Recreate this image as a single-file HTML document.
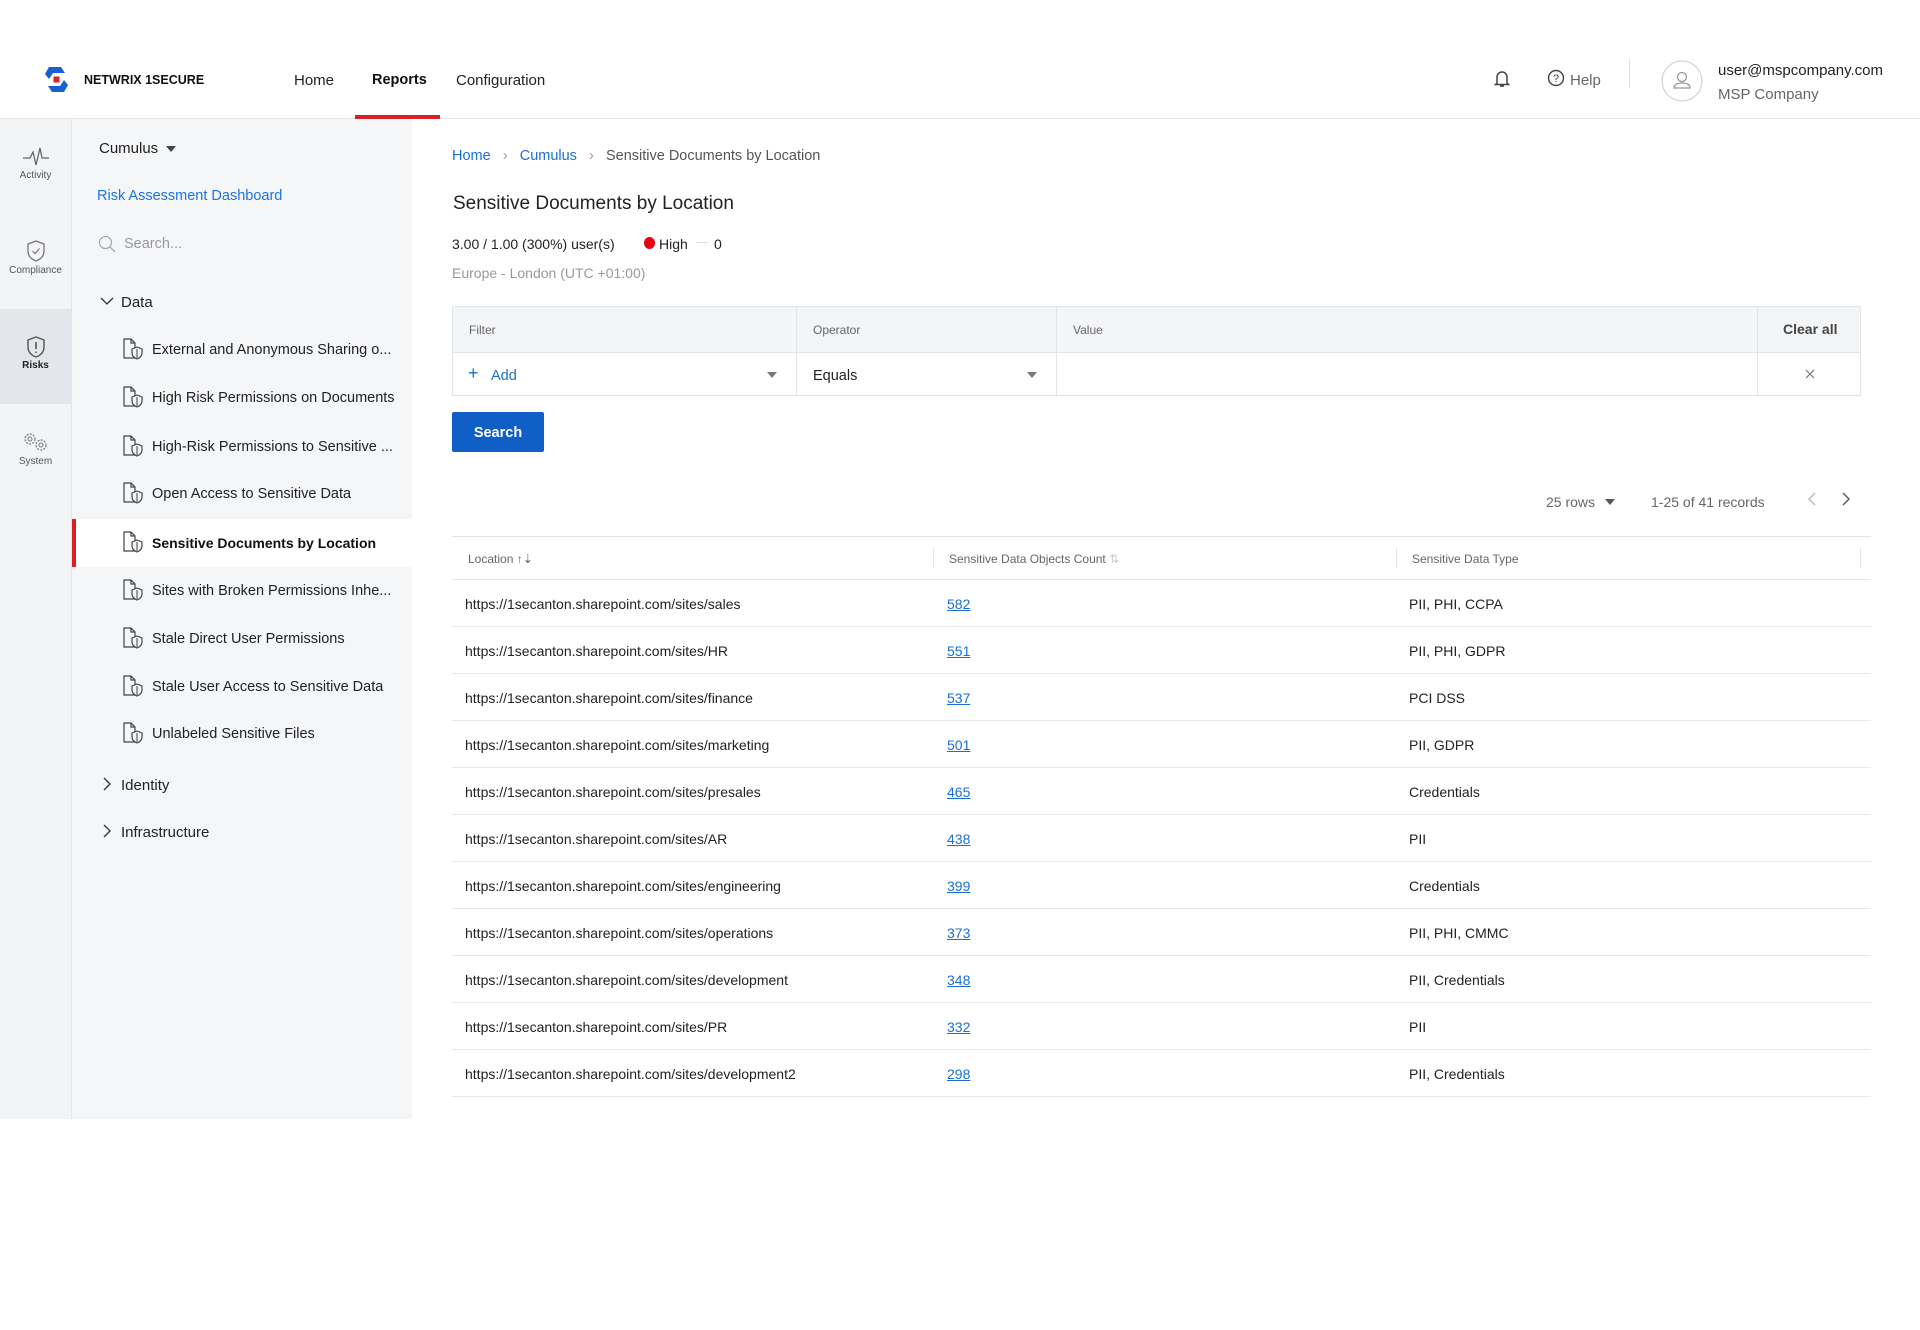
<!DOCTYPE html>
<html><head><meta charset="utf-8"><style>
*{box-sizing:border-box;margin:0;padding:0}
body{width:1920px;height:1330px;background:#fff;font-family:"Liberation Sans",sans-serif;color:#222;position:relative;overflow:hidden;font-size:14px}
.abs{position:absolute;white-space:nowrap}
.t{padding-top:2px}
.hdr{position:absolute;left:0;top:0;width:1920px;height:119px;border-bottom:1px solid #e3e5e8;background:#fff}
.rail{position:absolute;left:0;top:119px;width:72px;height:1000px;background:#f3f4f6;border-right:1px solid #e3e5e8}
.side{position:absolute;left:72px;top:119px;width:340px;height:1000px;background:#f5f6f8}
.rl{position:absolute;width:71px;text-align:center;font-size:10px;color:#555;padding-top:2px}
.si{position:absolute;left:152px;font-size:14.5px;color:#222;white-space:nowrap;padding-top:2px}
.ic{position:absolute;left:122px}
.bc{color:#1a6fd6}
.tbl{position:absolute;left:452px;top:306px;width:1409px;height:90px;border:1px solid #e2e5ea}
.row{position:absolute;left:452px;width:1419px;height:47px;border-bottom:1px solid #e6e8ec}
.row span{position:absolute;top:16px;white-space:nowrap;font-size:14px}
.row .a{left:13px}.row .b{left:495px;color:#1a6fd6;text-decoration:underline}.row .c{left:957px}
.hrow span{font-size:12px;color:#666;top:15px}
</style></head><body>
<div class="hdr"></div>
<svg class="abs" style="left:41px;top:64px" width="31" height="31" viewBox="0 0 31 31"><path d="M8 3 L20 3 L24 9 L12 9 L8 15 L4 10 Z" fill="#1560d4"/><path d="M23 28 L11 28 L7 22 L19 22 L23 16 L27 21 Z" fill="#1560d4"/><rect x="12.5" y="12.5" width="6" height="6" fill="#d8232a"/></svg>
<div class="abs t" style="left:84px;top:71px;font-size:12.5px;font-weight:bold;color:#111">NETWRIX 1SECURE</div>
<div class="abs t" style="left:294px;top:70px;font-size:15px;color:#222">Home</div>
<div class="abs t" style="left:372px;top:70px;font-size:14.5px;color:#111;font-weight:bold">Reports</div>
<div class="abs t" style="left:456px;top:70px;font-size:15px;color:#222">Configuration</div>
<div class="abs" style="left:355px;top:115px;width:85px;height:4px;background:#d7202a"></div>
<svg class="abs" style="left:1493px;top:69px" width="18" height="20" viewBox="0 0 18 20"><path d="M4 14 V8 a5 5 0 0 1 10 0 V14 L15.5 15.5 H2.5 Z M7 17 h4" fill="none" stroke="#444" stroke-width="1.5"/></svg>
<svg class="abs" style="left:1547px;top:69px" width="18" height="18"><circle cx="9" cy="9" r="7.5" fill="none" stroke="#444" stroke-width="1.4"/><text x="9" y="13" font-size="11" text-anchor="middle" fill="#444" font-family="Liberation Sans">?</text></svg>
<div class="abs t" style="left:1570px;top:70px;font-size:15px;color:#666">Help</div>
<div class="abs" style="left:1629px;top:60px;width:1px;height:28px;background:#e0e0e0"></div>
<svg class="abs" style="left:1661px;top:60px" width="42" height="42"><circle cx="21" cy="21" r="20" fill="#fff" stroke="#ccc"/><circle cx="21" cy="17" r="4.5" fill="none" stroke="#999" stroke-width="1.3"/><path d="M13 28 q0 -5 8 -5 q8 0 8 5 z" fill="none" stroke="#999" stroke-width="1.3"/></svg>
<div class="abs t" style="left:1718px;top:60px;font-size:15px;color:#222">user@mspcompany.com</div>
<div class="abs t" style="left:1718px;top:84px;font-size:15px;color:#666">MSP Company</div>

<div class="rail"></div>
<div class="abs" style="left:0;top:309px;width:71px;height:95px;background:#e3e6ea"></div>
<svg class="abs" style="left:23px;top:146px" width="26" height="22"><path d="M0 12 H7 L10 6 L13 19 L17 2 L19 12 H26" fill="none" stroke="#666" stroke-width="1.3"/></svg>
<div class="rl" style="left:0;top:168px">Activity</div>
<svg class="abs" style="left:26px;top:240px" width="20" height="22"><path d="M10 1 L18 4 V11 Q18 18 10 21 Q2 18 2 11 V4 Z" fill="none" stroke="#777" stroke-width="1.3"/><path d="M6.5 11 L9 13.5 L13.5 8.5" fill="none" stroke="#777" stroke-width="1.2"/></svg>
<div class="rl" style="left:0;top:263px">Compliance</div>
<svg class="abs" style="left:26px;top:336px" width="20" height="22"><path d="M10 1 L18 4 V11 Q18 18 10 21 Q2 18 2 11 V4 Z" fill="none" stroke="#555" stroke-width="1.4"/><path d="M10 6 V13 M10 15.5 V17" stroke="#555" stroke-width="1.6"/></svg>
<div class="rl" style="left:0;top:358px;color:#222;font-weight:bold">Risks</div>
<svg class="abs" style="left:22px;top:431px" width="28" height="22"><circle cx="8" cy="8" r="5" fill="none" stroke="#777" stroke-width="1.2" stroke-dasharray="2 1.3"/><circle cx="8" cy="8" r="2" fill="none" stroke="#777"/><circle cx="19" cy="14" r="5" fill="none" stroke="#777" stroke-width="1.2" stroke-dasharray="2 1.3"/><circle cx="19" cy="14" r="2" fill="none" stroke="#777"/></svg>
<div class="rl" style="left:0;top:454px">System</div>

<div class="side"></div>
<div class="abs t" style="left:99px;top:138px;font-size:15px;color:#222">Cumulus</div>
<svg class="abs" style="left:166px;top:146px" width="10" height="6"><path d="M0 0 H10 L5 6 Z" fill="#444"/></svg>
<div class="abs t" style="left:97px;top:186px;font-size:14.5px;color:#1a73e8">Risk Assessment Dashboard</div>
<svg class="abs" style="left:98px;top:235px" width="18" height="18"><circle cx="7.5" cy="7.5" r="6" fill="none" stroke="#aaa" stroke-width="1.3"/><path d="M12 12 L17 17" stroke="#aaa" stroke-width="1.3"/></svg>
<div class="abs t" style="left:124px;top:234px;font-size:14.5px;color:#999">Search...</div>
<svg class="abs" style="left:100px;top:297px" width="14" height="9"><path d="M1 1 L7 7 L13 1" fill="none" stroke="#333" stroke-width="1.3"/></svg>
<div class="abs t" style="left:121px;top:292px;font-size:15px;color:#222">Data</div>
<div class="abs" style="left:72px;top:519px;width:340px;height:48px;background:#fff"></div>
<div class="abs" style="left:72px;top:519px;width:4px;height:48px;background:#d7202a"></div>
<svg class="ic" style="top:338px" width="22" height="22"><defs><g id="di"><path d="M2 1 H9 L13 5 V20 H2 Z M9 1 V5 H13" fill="none" stroke="#444" stroke-width="1.2"/><path d="M15 9 L20 11 V15 Q20 19 15 21 Q10 19 10 15 V11 Z" fill="#f5f6f8" stroke="#444" stroke-width="1.2"/><path d="M15 11 V20" stroke="#444"/></g></defs><use href="#di"/></svg>
<svg class="ic" style="top:386px" width="22" height="22"><use href="#di"/></svg>
<svg class="ic" style="top:435px" width="22" height="22"><use href="#di"/></svg>
<svg class="ic" style="top:482px" width="22" height="22"><use href="#di"/></svg>
<svg class="ic" style="top:531px" width="22" height="22"><use href="#di"/></svg>
<svg class="ic" style="top:579px" width="22" height="22"><use href="#di"/></svg>
<svg class="ic" style="top:627px" width="22" height="22"><use href="#di"/></svg>
<svg class="ic" style="top:675px" width="22" height="22"><use href="#di"/></svg>
<svg class="ic" style="top:722px" width="22" height="22"><use href="#di"/></svg>
<div class="si" style="top:340px">External and Anonymous Sharing o...</div>
<div class="si" style="top:388px">High Risk Permissions on Documents</div>
<div class="si" style="top:437px">High-Risk Permissions to Sensitive ...</div>
<div class="si" style="top:484px">Open Access to Sensitive Data</div>
<div class="si" style="top:533px;font-weight:bold;color:#111;font-size:14px">Sensitive Documents by Location</div>
<div class="si" style="top:581px">Sites with Broken Permissions Inhe...</div>
<div class="si" style="top:629px">Stale Direct User Permissions</div>
<div class="si" style="top:677px">Stale User Access to Sensitive Data</div>
<div class="si" style="top:724px">Unlabeled Sensitive Files</div>
<svg class="abs" style="left:103px;top:777px" width="9" height="14"><path d="M1 1 L7 7 L1 13" fill="none" stroke="#333" stroke-width="1.3"/></svg>
<div class="abs t" style="left:121px;top:775px;font-size:15px">Identity</div>
<svg class="abs" style="left:103px;top:824px" width="9" height="14"><path d="M1 1 L7 7 L1 13" fill="none" stroke="#333" stroke-width="1.3"/></svg>
<div class="abs t" style="left:121px;top:822px;font-size:15px">Infrastructure</div>

<div class="abs t" style="left:452px;top:146px;font-size:14.5px;color:#555"><span class="bc">Home</span>&nbsp;&nbsp;&nbsp;<span style="color:#999">›</span>&nbsp;&nbsp;&nbsp;<span class="bc">Cumulus</span>&nbsp;&nbsp;&nbsp;<span style="color:#999">›</span>&nbsp;&nbsp;&nbsp;Sensitive Documents by Location</div>
<div class="abs t" style="left:453px;top:191px;font-size:19px;color:#222">Sensitive Documents by Location</div>
<div class="abs t" style="left:452px;top:234px;font-size:14px;color:#222">3.00 / 1.00 (300%) user(s)</div>
<div class="abs" style="left:644px;top:237px;width:11px;height:12px;border-radius:50%;background:#e8000f"></div>
<div class="abs t" style="left:659px;top:234px;font-size:14px">High</div>
<div class="abs" style="left:696px;top:242px;width:12px;height:1px;background:#ddd"></div>
<div class="abs t" style="left:714px;top:234px;font-size:14px">0</div>
<div class="abs t" style="left:452px;top:263px;font-size:14px;color:#999">Europe - London (UTC +01:00)</div>

<div class="tbl"></div>
<div class="abs" style="left:453px;top:307px;width:1407px;height:46px;background:#f4f5f7;border-bottom:1px solid #e2e5ea"></div>
<div class="abs" style="left:796px;top:306px;width:1px;height:90px;background:#e2e5ea"></div>
<div class="abs" style="left:1056px;top:306px;width:1px;height:90px;background:#e2e5ea"></div>
<div class="abs" style="left:1757px;top:306px;width:1px;height:90px;background:#e2e5ea"></div>
<div class="abs" style="left:469px;top:323px;font-size:12px;color:#666">Filter</div>
<div class="abs" style="left:813px;top:323px;font-size:12px;color:#666">Operator</div>
<div class="abs" style="left:1073px;top:323px;font-size:12px;color:#666">Value</div>
<div class="abs" style="left:1783px;top:321px;font-size:14px;color:#444;font-weight:bold">Clear all</div>
<div class="abs" style="left:468px;top:363px;font-size:18px;color:#1a6fd6">+</div>
<div class="abs t" style="left:491px;top:366px;font-size:14.5px;color:#1a6fd6">Add</div>
<svg class="abs" style="left:767px;top:372px" width="10" height="6"><path d="M0 0 H10 L5 6 Z" fill="#777"/></svg>
<div class="abs t" style="left:813px;top:366px;font-size:14.5px;color:#222">Equals</div>
<svg class="abs" style="left:1027px;top:372px" width="10" height="6"><path d="M0 0 H10 L5 6 Z" fill="#777"/></svg>
<svg class="abs" style="left:1805px;top:369px" width="10" height="10"><path d="M1 1 L9 9 M9 1 L1 9" stroke="#777" stroke-width="1.2"/></svg>
<div class="abs" style="left:452px;top:412px;width:92px;height:40px;background:#0f5fc7;border-radius:2px;color:#fff;font-weight:bold;font-size:14.5px;text-align:center;line-height:42px">Search</div>

<div class="abs t" style="left:1546px;top:492px;font-size:14px;color:#666">25 rows</div>
<svg class="abs" style="left:1605px;top:499px" width="10" height="6"><path d="M0 0 H10 L5 6 Z" fill="#555"/></svg>
<div class="abs t" style="left:1651px;top:492px;font-size:14px;color:#666">1-25 of 41 records</div>
<svg class="abs" style="left:1808px;top:492px" width="9" height="14"><path d="M7 1 L1 7 L7 13" fill="none" stroke="#bbb" stroke-width="1.4"/></svg>
<svg class="abs" style="left:1842px;top:492px" width="9" height="14"><path d="M1 1 L7 7 L1 13" fill="none" stroke="#555" stroke-width="1.4"/></svg>

<div class="abs" style="left:452px;top:536px;width:1419px;height:1px;background:#e2e5ea"></div>
<div class="row hrow" style="top:537px;height:43px"><span class="a" style="left:16px">Location ↑⇣</span><span style="left:497px">Sensitive Data Objects Count <b style="font-weight:normal;color:#ccc">⇅</b></span><span style="left:960px">Sensitive Data Type</span></div>
<div class="abs" style="left:933px;top:548px;width:1px;height:20px;background:#e2e5ea"></div>
<div class="abs" style="left:1396px;top:548px;width:1px;height:20px;background:#e2e5ea"></div>
<div class="abs" style="left:1860px;top:548px;width:1px;height:20px;background:#e2e5ea"></div>
<div class="row" style="top:580px"><span class="a">https://1secanton.sharepoint.com/sites/sales</span><span class="b">582</span><span class="c">PII, PHI, CCPA</span></div>
<div class="row" style="top:627px"><span class="a">https://1secanton.sharepoint.com/sites/HR</span><span class="b">551</span><span class="c">PII, PHI, GDPR</span></div>
<div class="row" style="top:674px"><span class="a">https://1secanton.sharepoint.com/sites/finance</span><span class="b">537</span><span class="c">PCI DSS</span></div>
<div class="row" style="top:721px"><span class="a">https://1secanton.sharepoint.com/sites/marketing</span><span class="b">501</span><span class="c">PII, GDPR</span></div>
<div class="row" style="top:768px"><span class="a">https://1secanton.sharepoint.com/sites/presales</span><span class="b">465</span><span class="c">Credentials</span></div>
<div class="row" style="top:815px"><span class="a">https://1secanton.sharepoint.com/sites/AR</span><span class="b">438</span><span class="c">PII</span></div>
<div class="row" style="top:862px"><span class="a">https://1secanton.sharepoint.com/sites/engineering</span><span class="b">399</span><span class="c">Credentials</span></div>
<div class="row" style="top:909px"><span class="a">https://1secanton.sharepoint.com/sites/operations</span><span class="b">373</span><span class="c">PII, PHI, CMMC</span></div>
<div class="row" style="top:956px"><span class="a">https://1secanton.sharepoint.com/sites/development</span><span class="b">348</span><span class="c">PII, Credentials</span></div>
<div class="row" style="top:1003px"><span class="a">https://1secanton.sharepoint.com/sites/PR</span><span class="b">332</span><span class="c">PII</span></div>
<div class="row" style="top:1050px"><span class="a">https://1secanton.sharepoint.com/sites/development2</span><span class="b">298</span><span class="c">PII, Credentials</span></div>
</body></html>
